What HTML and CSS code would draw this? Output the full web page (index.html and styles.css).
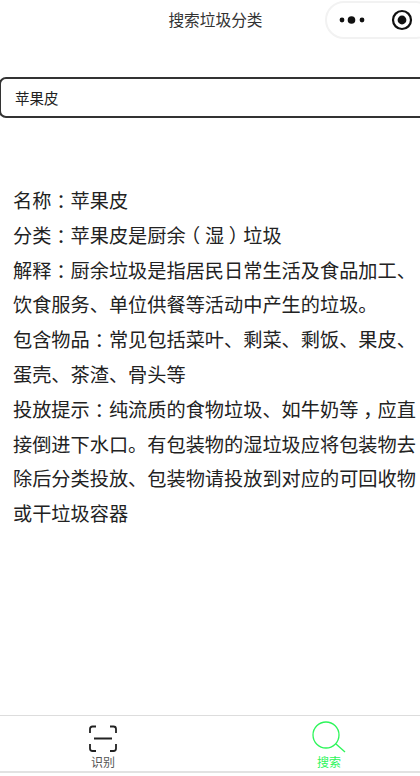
FILE: index.html
```
<!DOCTYPE html>
<html lang="zh">
<head>
<meta charset="utf-8">
<title>搜索垃圾分类</title>
<link rel="stylesheet" href="styles.css">
</head>
<body>
<div class="page">
  <header class="nav">
    <span class="nav-title">搜索垃圾分类</span>
    <div class="capsule">
      <svg class="more" width="26" height="10" viewBox="0 0 26 10"><circle cx="3" cy="5" r="2.400"/><circle cx="12.500" cy="5" r="3.800"/><circle cx="23" cy="5" r="2.400"/></svg>
      <svg class="target" width="22" height="22" viewBox="0 0 22 22"><circle cx="11" cy="11" r="9" fill="none" stroke="#111" stroke-width="2.200"/><circle cx="11" cy="11" r="4.400" fill="#111"/></svg>
    </div>
  </header>
  <div class="search"><span>苹果皮</span></div>
  <main class="result">
    <p>名称<span class="punct">：</span>苹果皮</p>
    <p>分类<span class="punct">：</span>苹果皮是厨余<span class="punct">（</span>湿<span class="punct">）</span>垃圾</p>
    <p>解释<span class="punct">：</span>厨余垃圾是指居民日常生活及食品加工、饮食服务、单位供餐等活动中产生的垃圾。</p>
    <p>包含物品<span class="punct">：</span>常见包括菜叶、剩菜、剩饭、果皮、蛋壳、茶渣、骨头等</p>
    <p>投放提示<span class="punct">：</span>纯流质的食物垃圾、如牛奶等<span class="punct">，</span>应直接倒进下水口。有包装物的湿垃圾应将包装物去除后分类投放、包装物请投放到对应的可回收物或干垃圾容器</p>
  </main>
  <nav class="tabs">
    <div class="tab">
      <svg width="30" height="28" viewBox="0 0 30 28" fill="none" stroke="#222" stroke-width="1.800"><path d="M2 8V4q0-2.500 2.500-2.500H8M22 1.500h3.500Q28 1.500 28 4v4M2 19v4.500Q2 26 4.500 26H8M22 26h3.500q2.500 0 2.500-2.500V19M6 13.500h18"/></svg>
      <span>识别</span>
    </div>
    <div class="tab active">
      <svg width="34" height="32" viewBox="0 0 34 32" fill="none" stroke="#2df55a" stroke-width="1.300"><circle cx="14" cy="14" r="13"/><path d="M24 23l9 8"/></svg>
      <span>搜索</span>
    </div>
  </nav>
</div>
</body>
</html>
```

FILE: styles.css
```
* { box-sizing: border-box; }
html, body { margin: 0; height: 100%; }
body {
  background: #fff;
  color: #222;
  font-family: "Noto Sans CJK SC", "Liberation Sans", sans-serif;
  overflow: hidden;
}
.page {
  width: 420px;
  height: 776px;
  display: flex;
  flex-direction: column;
  overflow: hidden;
}
.nav {
  height: 40px;
  flex: none;
  display: flex;
  align-items: center;
  justify-content: center;
  position: relative;
  color: #333;
}
.nav-title { font-size: 15.700px; margin-left: 11px; margin-top: -2px; }
.capsule {
  position: absolute;
  left: 325px;
  top: 1px;
  width: 110px;
  height: 38px;
  border: 2px solid #f2f2f2;
  border-radius: 19px;
  display: flex;
  align-items: center;
  padding-left: 12px;
  gap: 26px;
}
.more { fill: #111; }
.search {
  flex: none;
  margin: 37px 0 0 -1px;
  width: 440px;
  height: 41px;
  border: 2px solid #333;
  border-radius: 7px;
  padding-left: 14px;
  display: flex;
  align-items: center;
  font-size: 14.500px;
  color: #222;
}
.result {
  flex: 1;
  padding: 65px 0 0 13px;
  width: 420px;
  font-size: 19.200px;
  line-height: 34.800px;
}
.result p { margin: 0; width: 405px; }
.punct {
  font-feature-settings: "halt";
  padding: 0 0.25em;
}
.tabs {
  flex: none;
  height: 58px;
  margin-bottom: 3px;
  padding-left: 78px;
  border-top: 1px solid #ddd;
  border-bottom: 2px solid #e2e2e2;
  display: flex;
  gap: 176px;
}
.tab {
  width: 50px;
  display: flex;
  flex-direction: column;
  align-items: center;
  justify-content: flex-end;
  font-size: 12px;
  line-height: 15px;
  color: #555;
  padding-bottom: 2px;
}
.tab svg { display: block; flex: none; margin-bottom: 1px; }
.tab.active { color: #2df55a; }
```
